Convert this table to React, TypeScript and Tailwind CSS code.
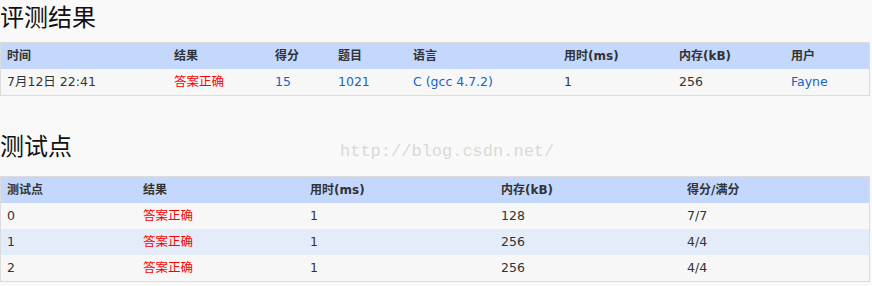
import React from "react";

const font = { fontFamily: '"DejaVu Sans", "Noto Sans CJK SC", sans-serif' };

type Cell = { text: string; color?: "red" | "blue" };

const cellColor = (c?: string) =>
  c === "red" ? "text-[#ff0000]" : c === "blue" ? "text-[#1a62c6]" : "text-[#333333]";

function Table({
  cols,
  headers,
  rows,
}: {
  cols: string;
  headers: string[];
  rows: Cell[][];
}) {
  return (
    <div className="border border-[#dcdcdc] w-[870px]">
      <div className={`grid ${cols} h-[26px] bg-[#c4d8fd] items-center`}>
        {headers.map((h, i) => (
          <div key={i} className="pl-[6px] font-bold text-[12px] text-[#333333] whitespace-nowrap">
            {h}
          </div>
        ))}
      </div>
      {rows.map((r, ri) => (
        <div
          key={ri}
          className={`grid ${cols} h-[26px] items-center ${ri % 2 === 1 ? "bg-[#e5ecf9]" : "bg-[#f7f7f7]"}`}
        >
          {r.map((c, ci) => (
            <div key={ci} className={`pl-[6px] text-[12.5px] whitespace-nowrap ${cellColor(c.color)}`}>
              {c.text}
            </div>
          ))}
        </div>
      ))}
    </div>
  );
}

export default function App() {
  return (
    <div className="relative w-[872px] h-[286px] bg-[#f9f9f9] overflow-hidden" style={font}>
      <h2 className="text-[24px] leading-[36px] text-[#111111] font-normal">评测结果</h2>
      <div className="mt-[6px]">
        <Table
          cols="grid-cols-[167px_101px_63px_75px_151px_115px_112px_1fr]"
          headers={["时间", "结果", "得分", "题目", "语言", "用时(ms)", "内存(kB)", "用户"]}
          rows={[
            [
              { text: "7月12日 22:41" },
              { text: "答案正确", color: "red" },
              { text: "15", color: "blue" },
              { text: "1021", color: "blue" },
              { text: "C (gcc 4.7.2)", color: "blue" },
              { text: "1" },
              { text: "256" },
              { text: "Fayne", color: "blue" },
            ],
          ]}
        />
      </div>
      <h2 className="mt-[33px] text-[24px] leading-[36px] text-[#111111] font-normal">测试点</h2>
      <div className="mt-[11px]">
        <Table
          cols="grid-cols-[136px_167px_191px_186px_1fr]"
          headers={["测试点", "结果", "用时(ms)", "内存(kB)", "得分/满分"]}
          rows={[
            [{ text: "0" }, { text: "答案正确", color: "red" }, { text: "1" }, { text: "128" }, { text: "7/7" }],
            [{ text: "1" }, { text: "答案正确", color: "red" }, { text: "1" }, { text: "256" }, { text: "4/4" }],
            [{ text: "2" }, { text: "答案正确", color: "red" }, { text: "1" }, { text: "256" }, { text: "4/4" }],
          ]}
        />
      </div>
      <div
        className="absolute left-[340px] top-[142px] text-[17px] leading-[20px] text-[#d9d9d5]"
        style={{ fontFamily: '"Liberation Mono", monospace' }}
      >
        http://blog.csdn.net/
      </div>
    </div>
  );
}
